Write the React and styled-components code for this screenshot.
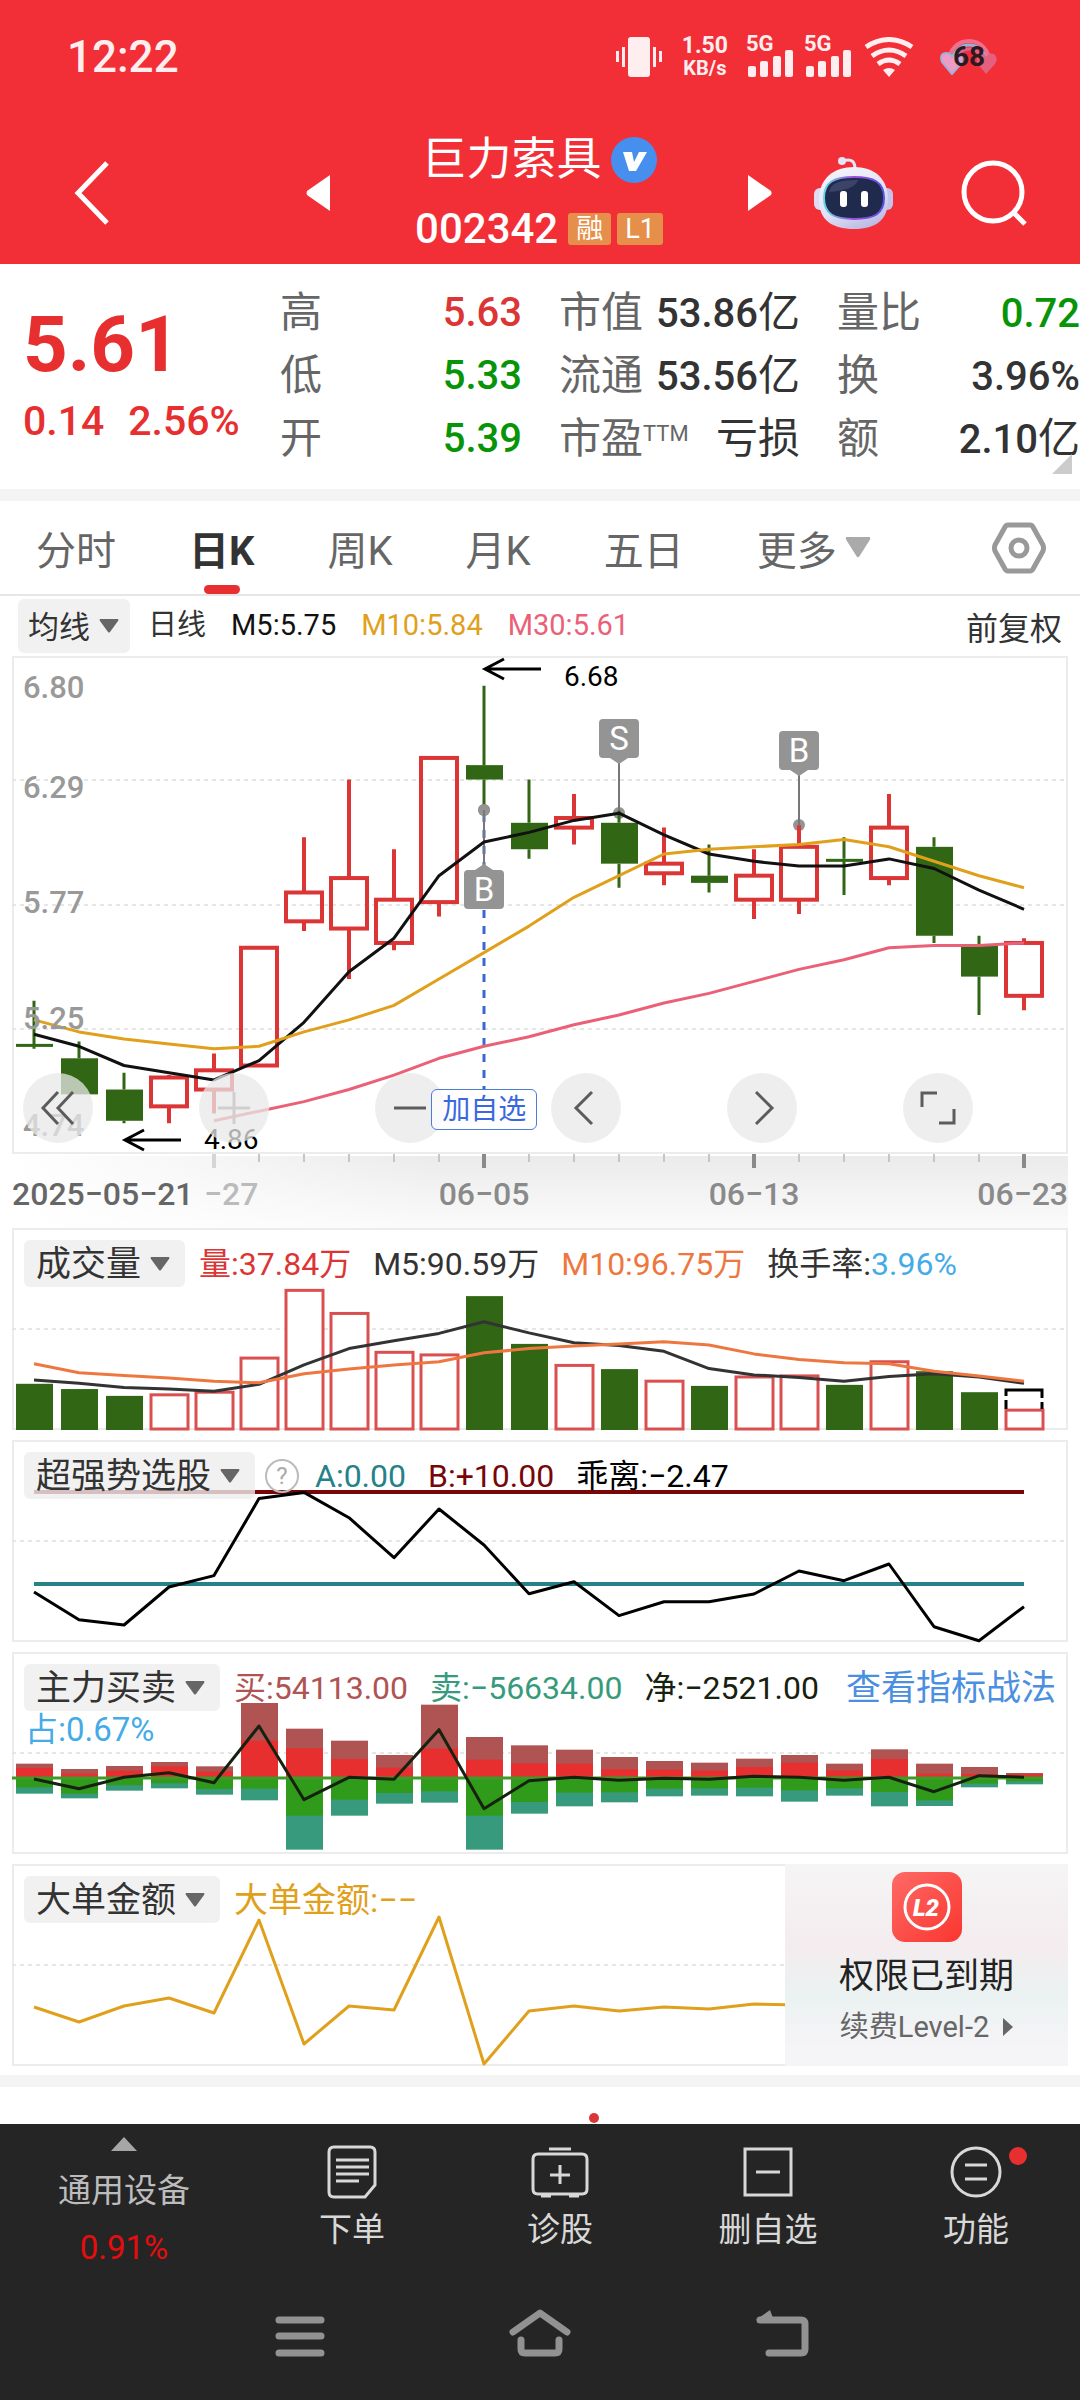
import React from 'react'
import styled, { createGlobalStyle } from 'styled-components'

const RED = '#dc3535'
const GREEN = '#306614'
const STEP = 45
const FIRST = 22
const BODY = 37

// [open, high, low, close]
const candles = [
  [5.19, 5.37, 5.17, 5.18], [5.13, 5.2, 4.98, 4.98], [5.0, 5.07, 4.86, 4.87],
  [4.93, 5.06, 4.86, 5.05], [5.0, 5.15, 4.9, 5.08], [5.1, 5.59, 5.1, 5.59],
  [5.7, 6.05, 5.66, 5.82], [5.67, 6.29, 5.46, 5.88], [5.61, 6.0, 5.58, 5.79],
  [5.78, 6.38, 5.72, 6.38], [6.35, 6.68, 6.16, 6.29], [6.11, 6.29, 5.96, 6.0],
  [6.09, 6.23, 6.02, 6.13], [6.11, 6.16, 5.84, 5.94], [5.9, 6.09, 5.85, 5.94],
  [5.89, 6.02, 5.82, 5.86], [5.79, 6.0, 5.71, 5.89], [5.79, 6.1, 5.73, 6.01],
  [5.96, 6.05, 5.81, 5.95], [5.88, 6.23, 5.85, 6.09], [6.01, 6.05, 5.61, 5.64],
  [5.6, 5.64, 5.31, 5.47], [5.39, 5.63, 5.33, 5.61],
]
const ma5 = [5.23, 5.18, 5.1, 5.07, 5.04, 5.12, 5.28, 5.49, 5.63, 5.89, 6.03, 6.07, 6.12, 6.15, 6.06, 5.98, 5.95, 5.93, 5.93, 5.96, 5.92, 5.83, 5.75]
const ma10 = [5.29, 5.24, 5.21, 5.19, 5.17, 5.18, 5.24, 5.29, 5.35, 5.46, 5.57, 5.68, 5.8, 5.89, 5.98, 6.0, 6.01, 6.02, 6.04, 6.01, 5.95, 5.89, 5.84]
const ma30 = [4.87, 4.91, 4.95, 5.0, 5.06, 5.13, 5.18, 5.22, 5.27, 5.31, 5.36, 5.4, 5.45, 5.5, 5.54, 5.59, 5.6, 5.6, 5.61]
const volumes = [88, 78, 65, 67, 72, 137, 266, 222, 148, 143, 255, 164, 123, 116, 93, 84, 101, 103, 86, 130, 112, 72, 37.84]
const vol5 = [95, 89, 81, 78, 74, 87, 124, 155, 170, 184, 206, 185, 166, 161, 150, 117, 105, 100, 93, 102, 107, 101, 89]
const vol10 = [126, 109, 104, 99, 93, 90, 107, 116, 124, 130, 147, 155, 160, 164, 168, 162, 145, 134, 128, 126, 112, 103, 93]
const bias = [-0.87, -3.88, -4.46, -0.33, 0.91, 9.28, 9.96, 7.21, 2.86, 8.15, 4.24, -1.05, 0.25, -3.44, -1.92, -1.92, -1.09, 1.41, 0.36, 2.17, -4.64, -6.16, -2.47]
// [buy total, buy main, sell main, sell total]
const flows = [
  [40, 27, 31, 50], [24, 10, 50, 64], [33, 19, 25, 41], [45, 32, 19, 34], [32, 16, 36, 53],
  [222, 109, 35, 70], [145, 86, 116, 218], [109, 54, 68, 116], [66, 28, 48, 80], [217, 85, 43, 77],
  [120, 52, 116, 218], [95, 41, 75, 110], [82, 40, 47, 88], [60, 23, 46, 76], [48, 22, 35, 58],
  [43, 19, 34, 56], [55, 30, 32, 58], [66, 43, 40, 74], [40, 20, 34, 56], [83, 54, 45, 88],
  [40, 10, 70, 87], [30, 9, 20, 31], [12, 8, 13, 22],
]
const netFlow = [-6, -35, -1, 13, -17, 153, -68, -1, -7, 142, -95, -11, -1, -10, -4, -7, 2, -1, -10, -1, -44, 4, -1]
const bigOrders = [1, -14, 2, 10, -5, 88, -36, 2, -2, 91, -56, -3, 2, -3, 1, -1, 4, 3]

const xAt = (i) => FIRST + STEP * i
const priceY = (p) => 1 + (6.8 - p) * 240.3
const toPoints = (list, y, start = 0) => list.map((v, i) => `${xAt(i + start)},${y(v).toFixed(1)}`).join(' ')

const Line = ({ list, y, color, start, width = 4 }) => (
  <polyline points={toPoints(list, y, start)} fill="none" stroke={color} strokeWidth={width} strokeLinejoin="round" />
)

const Frame = ({ height, guides }) => (
  <g fill="none">
    <rect x="1" y="1" width="1054" height={height - 2} stroke="#ececec" strokeWidth="2" />
    {guides.map((y) => (
      <path key={y} d={`M0 ${y}H1054`} stroke="#e6e6e6" strokeWidth="2" strokeDasharray="4 4" />
    ))}
  </g>
)

const Flag = ({ i, y, dot, letter, below }) => {
  const x = xAt(i)
  const edge = below ? y : y + 39
  const dir = below ? -1 : 1
  return (
    <g fill="#949494">
      <circle cx={x} cy={dot} r="6" />
      <path d={`M${x} ${dot}V${edge}`} stroke="#777" strokeWidth="2" />
      <path d={`M${x - 9} ${edge}L${x} ${edge + 6 * dir}L${x + 9} ${edge}Z`} />
      <rect x={x - 20} y={y} width="40" height="39" rx="4" />
      <text x={x} y={y + 31} fill="#fff" fontSize="33" textAnchor="middle">{letter}</text>
    </g>
  )
}

const PriceChart = () => (
  <Drawing viewBox="0 0 1056 498">
    <Frame height={498} guides={[124, 249, 373]} />
    <Flag i={13} y={63} dot={157} letter="S" />
    <Flag i={17} y={75} dot={169} letter="B" />
    <circle cx={xAt(10)} cy="154" r="6" fill="#949494" />
    {candles.map(([open, high, low, close], i) => {
      const up = close > open
      const top = priceY(Math.max(open, close))
      const bottom = priceY(Math.min(open, close))
      return (
        <g key={i} stroke={up ? RED : GREEN} strokeWidth={up ? 4 : 3} fill={up ? 'none' : GREEN}>
          <path d={`M${xAt(i)} ${priceY(high)}V${top}M${xAt(i)} ${bottom}V${priceY(low)}`} />
          {up
            ? <rect x={xAt(i) - 18} y={top} width="36" height={bottom - top} />
            : <rect x={xAt(i) - 18} y={top} width={BODY} height={Math.max(bottom - top, 3)} stroke="none" />}
        </g>
      )
    })}
    <path d={`M${xAt(10)} 158V434`} stroke="#3a68d2" strokeWidth="3" strokeDasharray="8 8" />
    <Flag i={10} y={214} dot={154} letter="B" below />
    <Line list={ma5} y={priceY} color="#111" width={3} />
    <Line list={ma10} y={priceY} color="#e0a01c" width={3} />
    <Line list={ma30} y={priceY} start={4} color="#ea6177" width={3} />
    <g fill="#999" fontSize="31" fontWeight="500">
      <text x="11" y="42">6.80</text>
      <text x="11" y="142">6.29</text>
      <text x="11" y="257">5.77</text>
      <text x="11" y="373">5.25</text>
      <text x="11" y="480">4.74</text>
    </g>
    <g stroke="#000" strokeWidth="3" fill="none">
      <path d="M529 13H473M492 3L473 13L492 23" />
      <path d="M169 484H113M132 474L113 484L132 494" />
    </g>
    <g fontSize="28">
      <text x="552" y="30">6.68</text>
      <text x="192" y="493">4.86</text>
    </g>
  </Drawing>
)

const Axis = () => (
  <Drawing viewBox="0 0 1056 74">
    <defs>
      <linearGradient id="down" x1="0" y1="0" x2="0" y2="1">
        <stop offset="0" stopColor="#ebebeb" />
        <stop offset="1" stopColor="#fbfbfb" />
      </linearGradient>
      <linearGradient id="side">
        <stop offset="0" stopColor="#fff" />
        <stop offset="0.4" stopColor="#fff" stopOpacity="0" />
      </linearGradient>
    </defs>
    <rect y="2" width="1056" height="72" fill="url(#down)" />
    <rect y="2" width="1056" height="72" fill="url(#side)" />
    {candles.map((_, i) => {
      if (i < 4) return null
      const major = i % 6 === 4
      const color = i === 4 ? '#d5d5d5' : major ? '#8a8a8a' : '#c6c6c6'
      return <path key={i} d={`M${xAt(i)} 0V${major ? 14 : 8}`} stroke={color} strokeWidth={major ? 4 : 2} />
    })}
    <g fontSize="32" fontWeight="500" fill="#8a8a8a">
      <text x="0" y="51" fill="#666">2025−05−21</text>
      <text x="192" y="51" fill="#bbb">−27</text>
      <text x={xAt(10)} y="51" textAnchor="middle">06−05</text>
      <text x={xAt(16)} y="51" textAnchor="middle">06−13</text>
      <text x="1056" y="51" textAnchor="end">06−23</text>
    </g>
  </Drawing>
)

const VolumeChart = () => {
  const y = (v) => 202 - v * 0.525
  return (
    <Drawing viewBox="0 0 1056 202">
      <Frame height={202} guides={[101]} />
      {volumes.map((v, i) =>
        candles[i][3] > candles[i][0]
          ? <rect key={i} x={xAt(i) - 18} y={y(v)} width="37" height={v * 0.525 - 1} fill="#fff" stroke="#da5050" strokeWidth="3" />
          : <rect key={i} x={xAt(i) - 18} y={y(v)} width="37" height={v * 0.525} fill={GREEN} />
      )}
      <path d="M994 181V162H1030V181" fill="none" stroke="#000" strokeWidth="3" strokeDasharray="9 4 50 4 12" />
      <Line list={vol5} y={y} color="#333" width={3} />
      <Line list={vol10} y={y} color="#ee7740" width={3} />
    </Drawing>
  )
}

const BiasChart = () => (
  <Drawing viewBox="0 0 1056 202">
    <Frame height={202} guides={[101]} />
    <path d="M22 144H1012" stroke="#258289" strokeWidth="4" />
    <path d="M22 52H1012" stroke="#770608" strokeWidth="4" />
    <Line list={bias} y={(v) => 144 - v * 9.2} color="#000" width={3} />
  </Drawing>
)

const FlowChart = () => (
  <Drawing viewBox="0 0 1056 202">
    <Frame height={202} guides={[101]} />
    {flows.map(([buy, mainBuy, mainSell, sell], i) => {
      const x = xAt(i) - 18
      return (
        <g key={i}>
          <rect x={x} y={125 - buy / 3} width="37" height={buy / 3} fill="#b05353" />
          <rect x={x} y={125 - mainBuy / 3} width="37" height={mainBuy / 3} fill="#e72f2f" />
          <rect x={x} y="125" width="37" height={sell / 3} fill="#389a7c" />
          <rect x={x} y="125" width="37" height={mainSell / 3} fill="#309b1b" />
        </g>
      )
    })}
    <path d="M0 126H1031" stroke="#3f9a28" strokeWidth="3" />
    <Line list={netFlow} y={(v) => 125 - v / 3} color="#16210f" width={3} />
  </Drawing>
)

const BigOrderChart = () => (
  <Drawing viewBox="0 0 1056 202">
    <Frame height={202} guides={[101]} />
    <Line list={bigOrders} y={(v) => 144 - v} color="#e0a01c" width={3} />
  </Drawing>
)

const Caret = ({ color = '#666', width = 20, height = 14 }) => (
  <svg width={width} height={height} viewBox="0 0 20 14" preserveAspectRatio="none" aria-hidden="true">
    <path d="M1 0H19Q20 1 19 2L11 13Q10 14 9 13L1 2Q0 1 1 0Z" fill={color} />
  </svg>
)

const Chip = ({ name, small }) => (
  <ChipBox $small={small}>
    <select aria-label={name} defaultValue={name}>
      <option>{name}</option>
    </select>
    <Caret />
  </ChipBox>
)

const Signal = () => (
  <SignalBox>
    <span>5G</span>
    <svg width="46" height="27" viewBox="0 0 46 27" fill="#ffeef0">
      <rect x="0" y="16" width="8" height="11" rx="2" />
      <rect x="12" y="11" width="8" height="16" rx="2" />
      <rect x="25" y="6" width="8" height="21" rx="2" />
      <rect x="37" y="0" width="8" height="27" rx="2" />
    </svg>
  </SignalBox>
)

const Robot = () => (
  <svg width="80" height="74" viewBox="0 0 80 74">
    <defs>
      <linearGradient id="shell" x1="0.2" y1="0" x2="0.7" y2="1">
        <stop offset="0" stopColor="#f4f4fd" />
        <stop offset="0.6" stopColor="#e2e1f6" />
        <stop offset="1" stopColor="#b9b8e2" />
      </linearGradient>
      <linearGradient id="glow">
        <stop offset="0" stopColor="#5fd8e4" />
        <stop offset="0.5" stopColor="#a04be0" />
        <stop offset="1" stopColor="#5553e6" />
      </linearGradient>
    </defs>
    <path d="M29 5C38 2 41 6 41 13" fill="none" stroke="#e6e5f7" strokeWidth="3" />
    <circle cx="28" cy="5" r="4" fill="#e6e5f7" />
    <rect x="0" y="32" width="12" height="22" rx="6" fill="#dedcf4" />
    <rect x="67" y="32" width="12" height="22" rx="6" fill="#c4c3ea" />
    <path d="M40 11C60 11 74 22 74 44C74 64 62 73 40 73C18 73 5 64 5 44C5 22 20 11 40 11Z" fill="url(#shell)" />
    <path d="M40 21C60 21 70 26 70 42C70 58 60 63 40 63C20 63 10 58 10 42C10 26 20 21 40 21Z" fill="#202a4c" stroke="url(#glow)" strokeWidth="2" />
    <path d="M15 36C17 27 24 24 44 24C42 32 28 35 15 36Z" fill="#3b4468" />
    <rect x="26" y="35" width="7" height="16" rx="3" fill="#fff" />
    <rect x="47" y="35" width="7" height="16" rx="3" fill="#fff" />
  </svg>
)

const rows = [
  ['高', '5.63', '#dc3535', '市值', '53.86', '亿', '量比', '0.72', '', '#079407'],
  ['低', '5.33', '#079407', '流通', '53.56', '亿', '换', '3.96%', '', '#333'],
  ['开', '5.39', '#079407', '市盈', '', '亏损', '额', '2.10', '亿', '#333'],
]

const navItems = [
  ['下单', <path d="M6 2H42Q47 2 47 7V40L37 52H6Q1 52 1 47V7Q1 2 6 2ZM8 15H41M8 22H41M8 29H41M8 36H31" />],
  ['诊股', <path d="M13 4H35M2 9H46Q51 9 51 14V44Q51 49 46 49H2Q-3 49 -3 44V14Q-3 9 2 9ZM24 20V39M14 30H34M5 51H15M33 51H43" />],
  ['删自选', <path d="M1 4H47V50H1ZM12 27H36" />],
  ['功能', <g><circle cx="24" cy="27" r="24" /><path d="M13 20H35M13 34H35" /></g>],
]

const App = () => (
  <Page>
    <GlobalStyle />
    <Header>
      <StatusBar>
        <Clock>12:22</Clock>
        <StatusIcons>
          <svg width="46" height="40" viewBox="0 0 46 40" fill="#ffeef0">
            <rect x="12" y="0" width="22" height="40" rx="3" />
            <path d="M6 10H9V30H6ZM0 14H3V25H0ZM37 10H40V30H37ZM43 14H46V25H43Z" />
          </svg>
          <Speed><b>1.50</b><span>KB/s</span></Speed>
          <Signal />
          <Signal />
          <svg width="50" height="40" viewBox="0 0 50 40" fill="none" stroke="#ffeef0" strokeWidth="5">
            <path d="M2 10Q25 -5 48 10M8 19Q25 7 42 19M14 27Q25 19 36 27" />
            <path d="M19 33Q25 29 31 33L25 40Z" fill="#ffeef0" stroke="none" />
          </svg>
          <Battery>
            <svg width="58" height="36" viewBox="0 0 58 36" fill="none">
              <path d="M9 22A20 20 0 0 1 49 22" stroke="#f26f8e" strokeWidth="4" />
              <path d="M12 23A17 17 0 0 1 46 23" stroke="#8fb6da" strokeWidth="3" />
              <path d="M15 24A14 14 0 0 1 43 24" stroke="#d7668c" strokeWidth="3" />
              <path d="M12 35L2 23Q-1 15 6 14Q10 14 12 18Q15 13 20 15Q24 19 21 25Z" fill="#ef9cc4" stroke="#9bb4dc" strokeWidth="2" />
              <path d="M46 35L37 24Q35 16 41 14Q45 14 46 18Q49 13 54 15Q59 19 55 25Z" fill="#e4607c" />
            </svg>
            <b>68</b>
          </Battery>
        </StatusIcons>
      </StatusBar>
      <TitleBar>
        <IconButton aria-label="返回">
          <svg width="36" height="64" viewBox="0 0 36 64" fill="none" stroke="#fff" strokeWidth="5">
            <path d="M33 2L4 32L33 62" />
          </svg>
        </IconButton>
        <IconButton aria-label="上一只">
          <svg width="24" height="36" viewBox="0 0 24 36"><path d="M24 0V36L1 20Q0 18 1 16Z" fill="#fff" /></svg>
        </IconButton>
        <TitleText>
          <h1>
            巨力索具
            <svg width="46" height="46" viewBox="0 0 46 46">
              <circle cx="23" cy="23" r="23" fill="#468fee" />
              <path d="M12 15H21L23 25L28 15H36L25 34H18Z" fill="#fff" />
            </svg>
          </h1>
          <CodeLine>
            <span>002342</span>
            <Tag>融</Tag>
            <Tag>L1</Tag>
          </CodeLine>
        </TitleText>
        <IconButton aria-label="下一只">
          <svg width="24" height="36" viewBox="0 0 24 36"><path d="M0 0V36L23 20Q24 18 23 16Z" fill="#fff" /></svg>
        </IconButton>
        <IconButton aria-label="智能助手"><Robot /></IconButton>
        <IconButton aria-label="搜索">
          <svg width="68" height="68" viewBox="0 0 68 68" fill="none" stroke="#fff" strokeWidth="5">
            <circle cx="33" cy="33" r="29" />
            <path d="M53 53L65 65" />
          </svg>
        </IconButton>
      </TitleBar>
    </Header>

    <Quote>
      <Price>
        <strong>5.61</strong>
        <p><span>0.14</span><span>2.56%</span></p>
      </Price>
      <Figures>
        {rows.map(([a, av, ac, b, bv, bUnit, c, cv, cUnit, cc]) => (
          <React.Fragment key={a}>
            <dt>{a}</dt><Figure $color={ac}>{av}</Figure>
            <dt>{b}{b === '市盈' && <sup>TTM</sup>}</dt><Figure $color="#333">{bv}<small>{bUnit}</small></Figure>
            <dt>{c}</dt><Figure $color={cc}>{cv}<small>{cUnit}</small></Figure>
          </React.Fragment>
        ))}
      </Figures>
      <Corner width="20" height="20" viewBox="0 0 20 20"><path d="M20 0V20H0Z" fill="#ccc" /></Corner>
    </Quote>
    <Band />

    <Tabs>
      <Tab>分时</Tab>
      <Tab $active>日K</Tab>
      <Tab>周K</Tab>
      <Tab>月K</Tab>
      <Tab>五日</Tab>
      <Tab aria-haspopup="menu">更多<Caret color="#aaa" width={26} height={21} /></Tab>
      <IconButton aria-label="设置">
        <svg width="54" height="52" viewBox="0 0 54 52" fill="none" stroke="#999" strokeWidth="5">
          <path d="M16 3H38Q40 3 41 5L51 23Q52 26 51 29L41 47Q40 49 38 49H16Q14 49 13 47L3 29Q2 26 3 23L13 5Q14 3 16 3Z" />
          <circle cx="27" cy="26" r="8" />
        </svg>
      </IconButton>
    </Tabs>

    <Averages>
      <Chip name="均线" small />
      <AverageValue $color="#333">日线</AverageValue>
      <AverageValue $color="#111">M5:5.75</AverageValue>
      <AverageValue $color="#e0a01c">M10:5.84</AverageValue>
      <AverageValue $color="#ea6177">M30:5.61</AverageValue>
      <Adjust>前复权</Adjust>
    </Averages>

    <Charts>
      <Panel>
        <PriceChart />
        <Controls>
          <Round aria-label="最早"><svg width="36" height="36" viewBox="0 0 36 36"><path d="M18 2L3 18L18 34M33 2L18 18L33 34" /></svg></Round>
          <Round aria-label="放大" $faded><svg width="36" height="36" viewBox="0 0 36 36"><path d="M2 18H34M18 2V34" /></svg></Round>
          <Round aria-label="缩小"><svg width="36" height="36" viewBox="0 0 36 36"><path d="M2 18H34" /></svg></Round>
          <Round aria-label="左移"><svg width="36" height="36" viewBox="0 0 36 36"><path d="M24 2L8 18L24 34" /></svg></Round>
          <Round aria-label="右移"><svg width="36" height="36" viewBox="0 0 36 36"><path d="M12 2L28 18L12 34" /></svg></Round>
          <Round aria-label="全屏"><svg width="36" height="36" viewBox="0 0 36 36"><path d="M17 3H2V17M19 33H34V19" /></svg></Round>
        </Controls>
        <AddTag>加自选</AddTag>
      </Panel>
      <Axis />
      <Panel>
        <VolumeChart />
        <PanelHead>
          <Chip name="成交量" />
          <Legend $color={RED}>量:37.84万</Legend>
          <Legend $color="#333">M5:90.59万</Legend>
          <Legend $color="#ee7740">M10:96.75万</Legend>
          <Legend $color="#333">换手率:<em>3.96%</em></Legend>
        </PanelHead>
      </Panel>
      <Panel $spaced>
        <BiasChart />
        <PanelHead>
          <Chip name="超强势选股" />
          <Help aria-label="说明">?</Help>
          <Legend $color="#258289">A:0.00</Legend>
          <Legend $color="#770608">B:+10.00</Legend>
          <Legend $color="#000">乖离:−2.47</Legend>
        </PanelHead>
      </Panel>
      <Panel $spaced>
        <FlowChart />
        <PanelHead>
          <Chip name="主力买卖" />
          <Legend $color="#b05353">买:54113.00</Legend>
          <Legend $color="#389a7c">卖:−56634.00</Legend>
          <Legend $color="#16210f">净:−2521.00</Legend>
          <GuideLink href="#guide">查看指标战法</GuideLink>
        </PanelHead>
        <SecondLine>占:0.67%</SecondLine>
      </Panel>
      <Panel $spaced>
        <BigOrderChart />
        <PanelHead>
          <Chip name="大单金额" />
          <Legend $color="#e0a01c" $large>大单金额:−−</Legend>
        </PanelHead>
        <Expired>
          <svg width="70" height="70" viewBox="0 0 70 70">
            <defs>
              <linearGradient id="badge" x1="0" y1="0" x2="1" y2="1">
                <stop offset="0" stopColor="#ff6a66" />
                <stop offset="1" stopColor="#f9362f" />
              </linearGradient>
            </defs>
            <rect width="70" height="70" rx="13" fill="url(#badge)" />
            <circle cx="35" cy="35" r="22" fill="none" stroke="#fff" strokeWidth="3" />
            <text x="34" y="44" fontSize="24" fontWeight="900" fontStyle="italic" textAnchor="middle" fill="#fff">L2</text>
          </svg>
          <strong>权限已到期</strong>
          <a href="#renew">
            续费Level-2
            <svg width="10" height="18" viewBox="0 0 10 18"><path d="M0 0L10 9L0 18Z" fill="#666" /></svg>
          </a>
        </Expired>
      </Panel>
    </Charts>
    <Band />
    <NextSection>
      <svg width="10" height="10" viewBox="0 0 10 10"><circle cx="5" cy="5" r="5" fill="#dc3535" /></svg>
    </NextSection>

    <BottomBar>
      <Sector>
        <svg width="26" height="14" viewBox="0 0 26 14"><path d="M13 0L26 14H0Z" fill="#a6a6a6" /></svg>
        <span>通用设备</span>
        <em>0.91%</em>
      </Sector>
      {navItems.map(([name, icon]) => (
        <NavButton key={name}>
          <svg width="58" height="54" viewBox="-5 0 58 54" fill="none" stroke="#d8d8d8" strokeWidth="3">{icon}</svg>
          {name}
          {name === '功能' && <Dot />}
        </NavButton>
      ))}
    </BottomBar>
    <SystemBar>
      <IconButton aria-label="任务">
        <svg width="50" height="48" viewBox="0 0 50 48" fill="none" stroke="#929292" strokeWidth="7" strokeLinecap="round"><path d="M4 11H46M4 27H46M4 44H46" /></svg>
      </IconButton>
      <IconButton aria-label="主页">
        <svg width="62" height="48" viewBox="0 0 62 48" fill="none" stroke="#929292" strokeWidth="7" strokeLinecap="round" strokeLinejoin="round">
          <path d="M4 23L31 4L58 23" />
          <path d="M12 31V40Q12 44 16 44H46Q50 44 50 40V31" />
        </svg>
      </IconButton>
      <IconButton aria-label="后退">
        <svg width="54" height="48" viewBox="0 0 54 48" fill="none" stroke="#929292" strokeWidth="7" strokeLinecap="round">
          <path d="M5 11H46Q50 11 50 15V40Q50 44 46 44H14" />
          <path d="M1 11L15 1L18 9Z" fill="#929292" stroke="none" />
        </svg>
      </IconButton>
    </SystemBar>
  </Page>
)

export default App

const GlobalStyle = createGlobalStyle`
  * {
    box-sizing: border-box;
  }
  body {
    margin: 0;
    background: #fff;
    font-family: Roboto, "Noto Sans CJK SC", sans-serif;
    color: #333;
  }
  h1, p, dl, dd {
    margin: 0;
  }
  button, select {
    font: inherit;
    color: inherit;
    border: none;
    background: none;
    padding: 0;
  }
  svg {
    display: block;
    flex: none;
  }
`

const Page = styled.div`
  width: 100%;
  overflow: hidden;
`

const Header = styled.header`
  background: #f22f37;
  color: #fff;
`

const StatusBar = styled.div`
  display: flex;
  justify-content: space-between;
  align-items: center;
  height: 114px;
  padding: 0 82px 0 67px;
`

const Clock = styled.span`
  font-size: 44px;
  font-weight: 500;
  color: #ffeef0;
`

const StatusIcons = styled.div`
  display: flex;
  align-items: center;
  gap: 12px;
  color: #ffeef0;
`

const Speed = styled.div`
  display: flex;
  flex-direction: column;
  align-items: center;
  margin: 0 8px;
  font-size: 20px;
  line-height: 22px;
  font-weight: 700;

  b {
    font-size: 23px;
    font-weight: 700;
  }
`

const SignalBox = styled.div`
  height: 40px;
  display: flex;
  align-items: flex-end;
  position: relative;

  span {
    position: absolute;
    left: -2px;
    top: -4px;
    font-size: 22px;
    line-height: 22px;
    font-weight: 700;
  }
`

const Battery = styled.div`
  position: relative;
  margin-left: 14px;

  b {
    position: absolute;
    inset: 0;
    text-align: center;
    font-size: 28px;
    line-height: 36px;
    color: #2b1a22;
  }
`

const IconButton = styled.button`
  display: flex;
  align-items: center;
  justify-content: center;
  cursor: pointer;
`

const TitleBar = styled.div`
  display: grid;
  grid-template-columns: 110px 220px 1fr 24px 164px 116px;
  align-items: center;
  height: 150px;
  padding: 8px 28px 0 0;

  ${IconButton}:first-child,
  ${IconButton}:nth-child(2) {
    justify-content: flex-end;
  }
`

const TitleText = styled.div`
  display: flex;
  flex-direction: column;
  align-items: center;

  h1 {
    display: flex;
    align-items: center;
    gap: 9px;
    font-size: 45px;
    line-height: 66px;
    font-weight: 400;
  }
`

const CodeLine = styled.div`
  display: flex;
  align-items: center;
  gap: 6px;
  margin-top: 6px;
  font-size: 42px;
  line-height: 60px;

  span:first-child {
    font-weight: 500;
    margin-right: 4px;
  }
`

const Tag = styled.span`
  padding: 0 8px;
  border-radius: 3px;
  background: #e58f4a;
  font-size: 27px;
  line-height: 32px;
`

const Quote = styled.section`
  position: relative;
  display: grid;
  grid-template-columns: 280px 1fr;
  height: 225px;
  padding-top: 17px;
`

const Price = styled.div`
  padding-left: 23px;
  color: #e72f2f;

  strong {
    display: block;
    font-size: 78px;
    line-height: 128px;
    font-weight: 700;
  }

  p {
    display: flex;
    gap: 24px;
    font-size: 41px;
    line-height: 24px;
    font-weight: 500;
  }
`

const Figures = styled.dl`
  display: grid;
  grid-template-columns: 122px 120px 132px 146px 110px 1fr;
  grid-auto-rows: 63px;
  align-items: center;

  dt {
    font-size: 42px;
    line-height: 63px;
    color: #666;
    white-space: nowrap;
  }

  dt:nth-of-type(3n + 2),
  dt:nth-of-type(3n) {
    padding-left: 37px;
  }

  sup {
    font-size: 22px;
    line-height: 22px;
    vertical-align: 12px;
  }
`

const Figure = styled.dd`
  font-size: 40px;
  line-height: 63px;
  font-weight: 500;
  text-align: right;
  white-space: nowrap;
  color: ${({ $color }) => $color};

  small {
    font-size: 42px;
    font-weight: 400;
  }
`

const Corner = styled.svg`
  position: absolute;
  right: 8px;
  bottom: 15px;
`

const Band = styled.div`
  height: 12px;
  background: #f4f4f4;
`

const Tabs = styled.nav`
  display: flex;
  gap: 73px;
  align-items: center;
  height: 95px;
  padding: 0 34px 0 36px;
  border-bottom: 2px solid #e6e6e6;

  ${IconButton} {
    margin-left: auto;
  }
`

const Tab = styled.button`
  position: relative;
  display: flex;
  align-items: center;
  gap: 8px;
  height: 93px;
  font-size: 40px;
  color: ${({ $active }) => ($active ? '#333' : '#666')};
  font-weight: ${({ $active }) => ($active ? 700 : 400)};
  cursor: pointer;

  &::after {
    content: '';
    display: ${({ $active }) => ($active ? 'block' : 'none')};
    position: absolute;
    left: 50%;
    bottom: 0;
    width: 36px;
    height: 9px;
    margin-left: -18px;
    border-radius: 5px;
    background: #e72f2f;
  }
`

const ChipBox = styled.label`
  position: relative;
  display: flex;
  align-items: center;
  border-radius: 6px;
  background: rgba(238, 238, 238, 0.8);

  select {
    appearance: none;
    height: ${({ $small }) => ($small ? 54 : 47)}px;
    padding: ${({ $small }) => ($small ? '2px 40px 0 10px' : '2px 43px 0 12px')};
    font-size: ${({ $small }) => ($small ? 31 : 35)}px;
    border-radius: 6px;
  }

  svg {
    position: absolute;
    right: ${({ $small }) => ($small ? 11 : 15)}px;
    pointer-events: none;
  }
`

const Averages = styled.div`
  display: flex;
  align-items: center;
  gap: 25px;
  height: 60px;
  padding: 0 18px;

  ${ChipBox} {
    margin-right: -7px;
  }
`

const AverageValue = styled.span`
  font-size: 29px;
  line-height: 56px;
  padding-bottom: 3px;
  color: ${({ $color }) => $color};
`

const Adjust = styled.button`
  margin-left: auto;
  font-size: 32px;
`

const Charts = styled.div`
  padding: 0 12px 9px;
`

const Drawing = styled.svg`
  display: block;
  width: 100%;
  height: auto;
  overflow: visible;
  font-family: Roboto, "Noto Sans CJK SC", sans-serif;
`

const Panel = styled.section`
  position: relative;
  margin-top: ${({ $spaced }) => ($spaced ? 10 : 0)}px;
`

const Controls = styled.div`
  position: absolute;
  left: 11px;
  right: 95px;
  bottom: 11px;
  display: flex;
  justify-content: space-between;
`

const Round = styled.button`
  display: flex;
  align-items: center;
  justify-content: center;
  width: 70px;
  height: 70px;
  border-radius: 50%;
  background: rgba(232, 232, 232, 0.75);

  svg {
    fill: none;
    stroke: ${({ $faded }) => ($faded ? '#cfcfcf' : '#5c5c5c')};
    stroke-width: 3px;
  }
`

const AddTag = styled.button`
  position: absolute;
  left: 39.7%;
  bottom: 24px;
  height: 41px;
  padding: 0 10px;
  border: 1px solid #4d7bd6;
  border-radius: 6px;
  background: rgba(255, 255, 255, 0.7);
  color: #3a68e0;
  font-size: 28px;
  line-height: 38px;
`

const PanelHead = styled.div`
  position: absolute;
  left: 12px;
  right: 12px;
  top: 12px;
  display: flex;
  align-items: center;
  gap: 22px;

  ${ChipBox} {
    margin-right: -8px;
  }
`

const Legend = styled.span`
  padding-top: 2px;
  font-size: ${({ $large }) => ($large ? 34 : 32)}px;
  line-height: 45px;
  white-space: nowrap;
  color: ${({ $color }) => $color};

  em {
    font-style: normal;
    color: #45abe6;
  }
`

const Help = styled.button`
  width: 34px;
  height: 34px;
  margin: 0 -6px 0 -4px;
  border: 2px solid #bbb;
  border-radius: 50%;
  color: #aaa;
  font-size: 24px;
  line-height: 30px;
`

const GuideLink = styled.a`
  margin-left: auto;
  padding-top: 2px;
  font-size: 35px;
  line-height: 45px;
  white-space: nowrap;
  color: #4b8fe0;
  text-decoration: none;
`

const SecondLine = styled.p`
  position: absolute;
  left: 13px;
  top: 59px;
  font-size: 33px;
  line-height: 38px;
  color: #45abe6;
`

const Expired = styled.aside`
  position: absolute;
  right: 0;
  top: 0;
  bottom: 0;
  width: 283px;
  padding-top: 8px;
  display: flex;
  flex-direction: column;
  align-items: center;
  background: linear-gradient(#f5f5f6, #f4ecee 40%, #ebf2f2 65%, #f5f4f7 90%);

  strong {
    margin-top: 11px;
    font-size: 35px;
    line-height: 48px;
    font-weight: 400;
    color: #222;
  }

  a {
    display: flex;
    align-items: center;
    gap: 14px;
    font-size: 29px;
    line-height: 52px;
    color: #666;
    text-decoration: none;
  }
`

const NextSection = styled.div`
  height: 37px;
  padding: 26px 0 0 589px;
`

const BottomBar = styled.nav`
  display: grid;
  grid-template-columns: 248px repeat(4, 1fr);
  height: 156px;
  background: #252525;
  color: #d8d8d8;
`

const Sector = styled.div`
  display: flex;
  flex-direction: column;
  align-items: center;
  padding-top: 13px;
  font-size: 33px;
  color: #bcbcbc;

  span {
    margin-top: 12px;
    line-height: 56px;
  }

  em {
    font-style: normal;
    font-weight: 400;
    line-height: 58px;
    color: #e60d0d;
  }
`

const NavButton = styled.button`
  position: relative;
  display: flex;
  flex-direction: column;
  align-items: center;
  padding-top: 21px;
  font-size: 33px;
  line-height: 62px;
`

const Dot = styled.i`
  position: absolute;
  left: 50%;
  top: 23px;
  margin-left: 33px;
  width: 18px;
  height: 18px;
  border-radius: 50%;
  background: #e72f2f;
`

const SystemBar = styled.div`
  display: flex;
  justify-content: center;
  align-items: flex-start;
  gap: 184px;
  height: 120px;
  padding: 29px 0 0 4px;
  background: #252525;
`
